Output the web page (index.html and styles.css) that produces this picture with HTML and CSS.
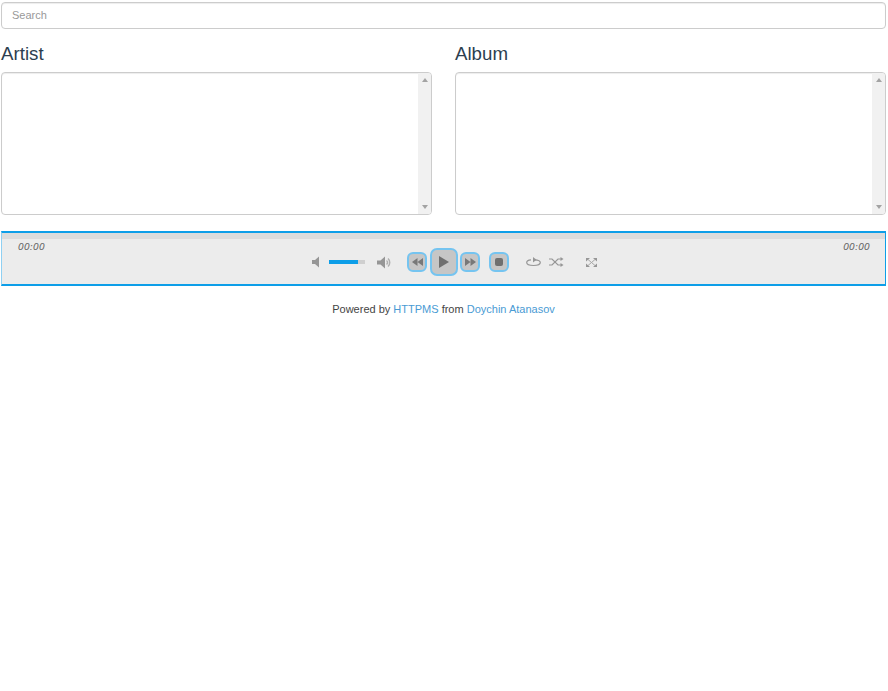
FILE: index.html
```html
<!DOCTYPE html>
<html lang="en">
<head>
<meta charset="utf-8">
<title>HTTPMS</title>
<link rel="stylesheet" href="styles.css">
</head>
<body>
<main class="page">
  <input class="search" type="text" placeholder="Search">
  <section class="columns">
    <div class="column">
      <h3 class="title">Artist</h3>
      <div class="list"><div class="list-body"></div><div class="scrollbar"><span class="arrow-up"></span><span class="arrow-down"></span></div></div>
    </div>
    <div class="column">
      <h3 class="title">Album</h3>
      <div class="list"><div class="list-body"></div><div class="scrollbar"><span class="arrow-up"></span><span class="arrow-down"></span></div></div>
    </div>
  </section>
  <section class="player">
    <div class="progress"></div>
    <div class="player-row">
      <span class="time">00:00</span>
      <div class="controls">
        <svg class="icon vol-min" width="12" height="12" viewBox="0 0 12 12"><path d="M1 4h3l4-3.500v11L4 8H1z" fill="#969696"/></svg>
        <div class="volume"><div class="volume-fill"></div></div>
        <svg class="icon vol-max" width="15" height="13" viewBox="0 0 15 13"><path d="M0 4.500h3.500L8 .5v12L3.500 8.500H0z" fill="#969696"/><path d="M9.500 4.500a2.500 2.500 0 0 1 0 4M11 2.500a5.500 5.500 0 0 1 0 8" fill="none" stroke="#b0b0b0" stroke-width="1.500"/></svg>
        <div class="transport">
          <button class="btn btn-small" aria-label="Previous"><svg width="11" height="8" viewBox="0 0 11 8"><path d="M5.500 0v8L0 4zM11 0v8L5.500 4z" fill="#787878"/></svg></button>
          <button class="btn btn-large" aria-label="Play"><svg width="10" height="12" viewBox="0 0 10 12"><path d="M0 0l10 6-10 6z" fill="#6f6f6f"/></svg></button>
          <button class="btn btn-small" aria-label="Next"><svg width="11" height="8" viewBox="0 0 11 8"><path d="M0 0v8l5.500-4zM5.500 0v8L11 4z" fill="#787878"/></svg></button>
        </div>
        <button class="btn btn-stop" aria-label="Stop"><span class="stop-mark"></span></button>
        <svg class="icon repeat" width="15" height="10" viewBox="0 0 15 10"><path d="M5 2.800C2.500 3 .7 4 .7 5.600c0 1.700 3 2.900 6.800 2.900s6.800-1.200 6.800-2.900c0-1.600-2.300-2.700-5.800-2.800" fill="none" stroke="#969696" stroke-width="1.200"/><path d="M7 0v5.500l3.500-2.800z" fill="#969696"/></svg>
        <svg class="icon shuffle" width="15" height="10" viewBox="0 0 15 10"><path d="M0 2h3l6 6h3M0 8h3l6-6h3" fill="none" stroke="#969696" stroke-width="1.200"/><path d="M11.500 0l3 2-3 2zM11.500 6l3 2-3 2z" fill="#969696"/></svg>
        <svg class="icon full" width="11" height="9" viewBox="0 0 11 9"><path d="M0 0h4L0 3.500zM11 0H7l4 3.500zM0 9h4L0 5.500zM11 9H7l4-3.500z" fill="#969696"/><path d="M2 1.500l7 6M9 1.500l-7 6" stroke="#a8a8a8" stroke-width="1"/></svg>
      </div>
      <span class="time">00:00</span>
    </div>
  </section>
  <p class="footer">Powered by <a href="#">HTTPMS</a> from <a href="#">Doychin Atanasov</a></p>
</main>
</body>
</html>
```
FILE: styles.css
```css
* { box-sizing: border-box; }
html, body { margin: 0; background: #fff; }
body { font-family: "Liberation Sans", Arial, sans-serif; font-size: 12px; color: #333; }
.page { width: 885px; margin-left: 1px; padding-top: 2px; }
.search {
  display: block; width: 100%; height: 27px; padding: 0 10px 1px;
  border: 1px solid #ccc; border-radius: 4px; outline: 0;
  font: 11px "Liberation Sans", Arial, sans-serif; color: #555;
  box-shadow: inset 0 1px 1px rgba(0,0,0,.075);
}
.search::placeholder { color: #999; opacity: 1; }
.columns { display: grid; grid-template-columns: 431px 431px; column-gap: 23px; margin-top: 14px; }
.title { margin: 0 0 8px; font-size: 18.7px; font-weight: 400; line-height: 21px; color: #2c3e50; }
.list { display: flex; height: 143px; border: 1px solid #ccc; border-radius: 4px; overflow: hidden; box-shadow: inset 0 1px 1px rgba(0,0,0,.075); }
.list-body { flex: 1; }
.scrollbar { width: 13px; background: #f1f1f1; display: flex; flex-direction: column; justify-content: space-between; align-items: center; padding: 5px 0; }
.arrow-up { border: 3.500px solid transparent; border-top: 0; border-bottom: 4px solid #a3a3a3; }
.arrow-down { border: 3.500px solid transparent; border-bottom: 0; border-top: 4px solid #a3a3a3; }
.player { margin-top: 16px; height: 55px; background: #ececec; border: 1px solid #0d9ee8; border-top-width: 2px; border-bottom-width: 2px; border-left-color: #8fd0f2; }
.progress { height: 6px; background: #dcdcdc; }
.player-row { display: flex; justify-content: space-between; padding: 0 15px 0 16px; position: relative; }
.time { font: italic 9.300px "DejaVu Sans", sans-serif; color: #666; line-height: 12px; padding-top: 2px; }
.controls { position: absolute; left: 309px; top: 9px; display: flex; align-items: center; height: 28px; }
.icon { display: block; flex: none; }
.volume { width: 36px; height: 4px; margin-left: 6px; background: #cfcfcf; }
.volume-fill { width: 80%; height: 100%; background: #0d9ee8; }
.vol-max { margin-left: 12px; }
.transport { display: flex; align-items: center; margin-left: 15px; gap: 3px; }
.btn { display: flex; align-items: center; justify-content: center; padding: 0; background: #c6c6c6; border: 2px solid #75c4f0; }
.btn-small { width: 20px; height: 20px; border-radius: 6px; }
.btn-small + .btn-large + .btn-small { margin-left: -1px; }
.btn-large { width: 28px; height: 28px; border-radius: 7px; }
.btn-stop { width: 20px; height: 20px; border-radius: 6px; margin-left: 9px; }
.stop-mark { width: 8px; height: 8px; background: #6f6f6f; border-radius: 2px; }
.repeat { margin-left: 17px; }
.shuffle { margin-left: 8px; }
.full { margin-left: 22px; }
.footer { margin: 16px 0 0; text-align: center; font-size: 11px; line-height: 14px; color: #444; }
.footer a { color: #4a9bd4; text-decoration: none; }
```
